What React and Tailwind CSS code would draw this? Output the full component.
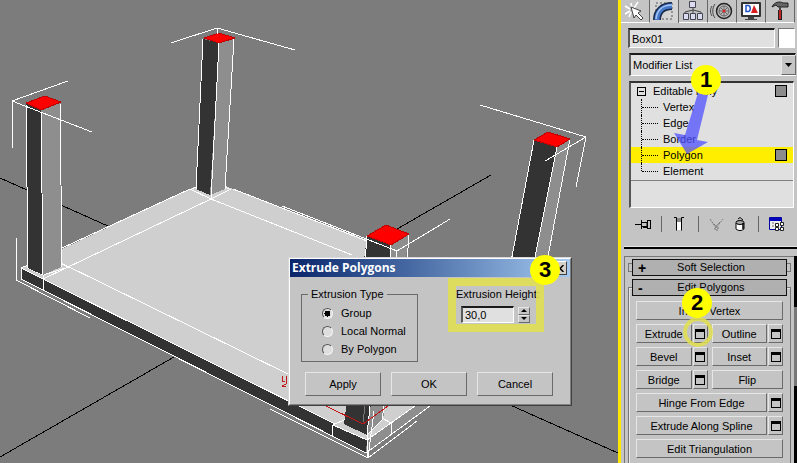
import React from "react";

const raised =
  "border border-t-[#e6e6e6] border-l-[#e6e6e6] border-b-[#6a6a6a] border-r-[#6a6a6a] bg-[#c4c4c4]";
const sunken =
  "border-t-2 border-l-2 border-b border-r border-t-[#1a1a1a] border-l-[#5a5a5a] border-b-white border-r-white bg-[#e0e0e0]";

function Scene() {
  return (
    <svg
      className="block h-full w-full"
      viewBox="0 0 618 463"
      preserveAspectRatio="xMinYMin slice"
      shapeRendering="crispEdges"
      fill="none"
      role="img"
      aria-label="Perspective viewport"
    >
      <g stroke="#000">
        <path d="M0 178L618 453M0 457L174 357M397 229L491 175" />
      </g>
      <path d="M21 268L62 249L190 189L211 180L233 189L367 240L470 290L470 366L415 406L367 440Z" fill="#cfcfcf" />
      <path d="M21 268L367 440L366 453L21 279Z" fill="#333" />
      <path d="M367 440L415 406H430L366 453Z" fill="#8e8e8e" />
      <g stroke="#fff">
        <path d="M21 279V268L28 265M62 248L190 189M233 189L367 241M21 268L367 440M21 279L366 453L430 406M367 440L415 406" />
        <path d="M43 279L211 199L352 255M61 263L288 374M190 189L211 199L231 189M28 268L43 275L69 267L61 264M43 275V290" />
        <path d="M196 187L190 190M225 187L231 190" />
      </g>

      <path d="M26 103L41 110L43 275L28 268Z" fill="#333" />
      <path d="M41 110L61 102L61 267L43 275Z" fill="#8e8e8e" />
      <path d="M26 103L28 268M41 110L43 275M60 102L62 267" stroke="#fff" />
      <path d="M26 103L45 96L61 102L41 110Z" fill="#f00" stroke="#c00000" />

      <path d="M203 39L219 43L210 195L196 189Z" fill="#333" />
      <path d="M219 43L234 39L225 189L210 195Z" fill="#8e8e8e" />
      <path d="M203 39L196 189M219 43L211 199M234 39L225 189" stroke="#fff" />
      <path d="M204 38L219 33L235 38L219 43Z" fill="#f00" stroke="#c00000" />

      <path d="M534 140L557 147L534 262L511 262Z" fill="#333" />
      <path d="M557 147L570 139L547 262L534 262Z" fill="#8e8e8e" />
      <path d="M534 140L511 262M557 147L534 262M570 139L547 262" stroke="#fff" />
      <path d="M534 140L548 132L570 139L557 147Z" fill="#f00" stroke="#c00000" />

      <path d="M333 425L344 420L382 418L391 423L367 440Z" fill="#cfcfcf" stroke="#fff" />
      <path d="M367 236L391 245L367 435L344 424Z" fill="#333" />
      <path d="M391 245L409 234L383 420L367 435Z" fill="#8e8e8e" />
      <path d="M367 236L365 262M391 245L390 262M409 234L407 262M384 406L382 420M370 406L367 435L382 420" stroke="#fff" />
      <path d="M333 425L332 437M391 423V435M367 435V458" stroke="#fff" />
      <path d="M365 406L363 422" stroke="#777" />
      <path d="M367 236L386 225L409 234L391 245Z" fill="#f00" stroke="#c00000" />

      <g stroke="#fff">
        <path d="M68 81L12 101L92 132M12 101V148M16 238V280L90 318" />
        <path d="M171 43L217 28L295 50M217 28V34" />
        <path d="M480 105L586 137L545 161M586 137L576 187" />
        <path d="M282 206L397 251L450 219M397 251L396 262" />
        <path d="M270 409L368 458L417 421M368 458L374 411" />
      </g>
      <path d="M326 406L363 424L388 406M282 376V381L285 382M287 376L286 384L282 386H286" stroke="#c41818" />
    </svg>
  );
}

function Badge({ n, className }) {
  return (
    <span
      className={
        "absolute z-20 flex size-[30px] items-center justify-center rounded-full bg-[#ff0] font-['Liberation_Sans',sans-serif] text-[22px] leading-none font-bold text-black " +
        className
      }
    >
      {n}
    </span>
  );
}

function PushButton({ children, className = "" }) {
  return (
    <button type="button" className={`${raised} flex items-center justify-center whitespace-nowrap ${className}`}>
      {children}
    </button>
  );
}

function Radio({ label, checked }) {
  return (
    <label className="flex h-[18px] items-center gap-2">
      <input
        type="radio"
        name="extrusion-type"
        defaultChecked={checked}
        className="size-[11px] appearance-none rounded-full border border-t-[#555] border-l-[#555] border-r-[#f4f4f4] border-b-[#f4f4f4] bg-[#dedede] checked:bg-[radial-gradient(circle,#000_0_3px,#dedede_3px)]"
      />
      {label}
    </label>
  );
}

function Dialog() {
  return (
    <section
      role="dialog"
      aria-label="Extrude Polygons"
      className="absolute top-[257px] left-[288px] h-[149px] w-[284px] border border-t-[#d8d8d8] border-l-[#d8d8d8] border-r-[#404040] border-b-[#404040] bg-[#c4c4c4]"
    >
      <div className="h-full border border-t-white border-l-white border-r-[#808080] border-b-[#808080]">
        <header className="flex h-[18px] items-center justify-between bg-linear-to-r from-[#0a246a] to-[#a6caf0] pr-[3px] pl-[2px]">
          <h2 className="font-['Open_Sans','Noto_Sans',sans-serif] text-[12px] leading-[16px] font-bold text-white">
            Extrude Polygons
          </h2>
          <button
            type="button"
            aria-label="Close"
            className="flex h-[14px] w-[15px] items-center justify-center border border-t-white border-l-white border-r-[#404040] border-b-[#404040] bg-[#d4d0c8]"
          >
            <svg width="8" height="7" viewBox="0 0 8 7" stroke="#000" strokeWidth="1.5">
              <path d="M0.5 0L7.5 7M7.5 0L0.5 7" />
            </svg>
          </button>
        </header>
        <div className="flex gap-[38px] pt-[10px] pl-[11px]">
          <fieldset className="h-[75px] w-[117px] border border-[#6a6a6a] pl-[20px]">
            <legend className="-ml-[14px] px-[3px] leading-[14px]">Extrusion Type</legend>
            <div className="pt-[3px]">
              <Radio label="Group" checked />
              <Radio label="Local Normal" />
              <Radio label="By Polygon" />
            </div>
          </fieldset>
          <div>
            <label htmlFor="height" className="block leading-[14px] whitespace-nowrap">
              Extrusion Height:
            </label>
            <div className="mt-[5px] ml-[5px] flex items-center gap-[4px]">
              <input
                id="height"
                defaultValue="30,0"
                className={`${sunken} h-[17px] w-[53px] pl-[2px] leading-[14px] outline-none`}
              />
              <div className="flex flex-col">
                {["M0 3L3 0L6 3Z", "M0 0H6L3 3Z"].map((d, i) => (
                  <button
                    key={d}
                    type="button"
                    aria-label={i ? "Decrease" : "Increase"}
                    className={`${raised} flex h-[8px] w-[12px] items-center justify-center`}
                  >
                    <svg width="6" height="3" viewBox="0 0 6 3">
                      <path d={d} />
                    </svg>
                  </button>
                ))}
              </div>
            </div>
          </div>
        </div>
        <div className="mt-[10px] ml-[15px] flex gap-[10px]">
          <PushButton className="h-[24px] w-[76px]">Apply</PushButton>
          <PushButton className="h-[24px] w-[76px]">OK</PushButton>
          <PushButton className="h-[24px] w-[76px]">Cancel</PushButton>
        </div>
      </div>
      <div className="pointer-events-none absolute top-[20px] left-[159px] h-[54px] w-[96px] border-8 border-[#e2e04c]/85" />
      <Badge n="3" className="-top-[3px] left-[241px]" />
    </section>
  );
}

const tabs = [
  {
    name: "Create",
    art: (
      <>
        <path d="M8 2L9 7M2 5L7 8M2 13L7 10M15 1L11 7M6 16L8 11" stroke="#fff" strokeWidth="1.5" />
        <path d="M8 6L11 17L13 14L18 19L20 17L15 12L18 10Z" fill="#fff" stroke="#444" />
      </>
    ),
  },
  {
    name: "Modify",
    art: (
      <>
        <path d="M4 1H20V17H4Z" stroke="#555" strokeDasharray="2 2" />
        <path d="M5 18C5 9 11 4 20 4" stroke="#182848" strokeWidth="8" />
        <path d="M5 18C5 9 11 4 20 4" stroke="#4678c8" strokeWidth="5" />
        <path d="M4 17C5 8 11 3 20 3" stroke="#a8c8f8" strokeWidth="1.5" />
      </>
    ),
  },
  {
    name: "Hierarchy",
    art: (
      <>
        <path d="M12 6V14M4 14V11L12 9L20 11V14" stroke="#444" />
        <path d="M8.500 .5H14.500V6.500H8.500ZM2.500 12.500H7.500V18.500H2.500ZM9.500 12.500H14.500V18.500H9.500ZM16.500 12.500H21.500V18.500H16.500Z" fill="#dcdcf0" stroke="#445" />
      </>
    ),
  },
  {
    name: "Motion",
    art: (
      <>
        <circle cx="14" cy="10" r="7.5" fill="#bbb" stroke="#222" strokeWidth="1.5" />
        <circle cx="14" cy="10" r="5" stroke="#666" />
        <path d="M14 5V15M9 10H19M10.500 6.500L17.500 13.500M17.500 6.500L10.500 13.500" stroke="#666" />
        <circle cx="14" cy="10" r="1.5" fill="#d22" />
        <path d="M5 3C2 7 2 13 5 17M2 5C0 8 0 12 2 15" stroke="#444" />
      </>
    ),
  },
  {
    name: "Display",
    art: (
      <>
        <rect x="2" y="1" width="20" height="15" rx="1" fill="#333" />
        <rect x="4" y="3" width="16" height="11" fill="#fff" />
        <path d="M7 4.500V10.500H9C12 10.500 12 4.500 9 4.500Z" stroke="#2454c8" strokeWidth="1.5" />
        <path d="M12 12L15 4L19 12Z" fill="#d82020" />
        <path d="M9 16H15V18H18V19H6V18H9Z" fill="#444" />
      </>
    ),
  },
  {
    name: "Utilities",
    art: (
      <>
        <path d="M4 6C6 1 12 0 15 2H20V6H15L14 6H10L8 4Z" fill="#666" stroke="#222" />
        <path d="M12 6V10" stroke="#444" strokeWidth="2" />
        <path d="M12 9V19" stroke="#222" strokeWidth="4" />
        <path d="M12 9V18" stroke="#c02424" strokeWidth="2" />
      </>
    ),
  },
];

const toolBtn = "flex h-[20px] items-center justify-center";

function StackTools() {
  return (
    <div className="mt-[6px] ml-[12px] flex h-[20px] items-center">
      <button type="button" aria-label="Pin stack" className={`${toolBtn} w-[20px]`}>
        <svg width="17" height="11" viewBox="0 0 17 11" fill="none" stroke="#000">
          <path d="M0 5.5H6M6.5 1V10M7 3.5H12V7.5H7M12.5 1V10M15.5 1V10M13 1.5H15M13 9.5H15" />
          <path d="M8 8H12" strokeWidth="2" />
        </svg>
      </button>
      <span className="ml-[8px] h-[16px] w-px bg-[#666]" />
      <button type="button" aria-label="Show end result" className={`${toolBtn} ml-[7px] w-[20px]`}>
        <svg width="10" height="14" viewBox="0 0 10 14" fill="none">
          <path d="M3 1H7V13H3Z" fill="#fff" />
          <path d="M3 1H7V5H3Z" fill="#888" />
          <path d="M0 .5H2.500V13.500M10 .5H7.500V13.500" stroke="#000" />
        </svg>
      </button>
      <span className="ml-[9px] h-[16px] w-px bg-[#666]" />
      <button type="button" aria-label="Make unique" className={`${toolBtn} ml-[7px] w-[20px]`}>
        <svg width="15" height="13" viewBox="0 0 15 13" fill="none" stroke="#777" strokeDasharray="2 1">
          <path d="M1 1L7 10L14 1M3 4L7 8L11 4M6 9H9V12H6Z" />
        </svg>
      </button>
      <button type="button" aria-label="Remove modifier" className={`${toolBtn} ml-[4px] w-[20px]`}>
        <svg width="10" height="14" viewBox="0 0 10 14" fill="none" stroke="#000">
          <path d="M1 6V12C3 14 7 14 9 12V6Z" fill="#fff" />
          <ellipse cx="5" cy="5.5" rx="4" ry="2" fill="#aaa" />
          <path d="M3 2L5 .5L8 3" />
          <path d="M8 6V12" strokeWidth="1.500" />
        </svg>
      </button>
      <span className="ml-[8px] h-[16px] w-px bg-[#666]" />
      <button type="button" aria-label="Configure modifier sets" className={`${toolBtn} ml-[8px] w-[20px]`}>
        <svg width="16" height="14" viewBox="0 0 16 14" fill="none">
          <path d="M.5 .5H12.500V12.500H.5Z" fill="#eee" stroke="#0000a0" />
          <path d="M1 1H12V4H1Z" fill="#0000c0" />
          <path d="M3 6H5M3 9H5" stroke="#777" />
          <path d="M6.500 6.500H9.500V9.500H6.500ZM11.500 5.500H14.500V8.500H11.500ZM6.500 10.500H9.500V13.500H6.500ZM11.500 10.500H14.500V13.500H11.500Z" fill="#fff" stroke="#222" />
        </svg>
      </button>
    </div>
  );
}

function ModifierStack() {
  const rows = ["Vertex", "Edge", "Border", "Polygon", "Element"];
  return (
    <div className="mt-[5px] ml-[8px] h-[127px] w-[165px] border-t-2 border-r border-b border-l-2 border-t-[#333] border-l-[#555] border-r-white border-b-white bg-[#e0e0e0]">
      <ul className="border-b border-[#808080] pb-[1px]">
        <li className="flex h-[16px] items-center pr-[6px] pl-[6px]">
          <button
            type="button"
            aria-label="Collapse"
            className="flex size-[9px] items-center justify-center border border-black"
          >
            <span className="h-px w-[5px] bg-black" />
          </button>
          <span className="ml-[7px] flex-1">Editable Poly</span>
          <span className="size-[12px] border border-black bg-[#8c8c8c]" />
        </li>
        {rows.map((r, i) => (
          <li
            key={r}
            className={`flex h-[16px] items-center pr-[6px] pl-[10px] ${r === "Polygon" ? "bg-[#ffee00]" : ""}`}
          >
            <span className={`w-px self-start border-l border-dotted border-black ${i === 4 ? "h-[8px]" : "h-[16px]"}`} />
            <span className="w-[16px] border-t border-dotted border-black" />
            <span className="ml-[5px] flex-1">{r}</span>
            {r === "Polygon" && <span className="size-[12px] border border-black bg-[#8c8c8c]" />}
          </li>
        ))}
      </ul>
    </div>
  );
}

function WithSettings({ label }) {
  return (
    <div className="flex gap-px">
      <PushButton className="h-[19px] flex-1">{label}</PushButton>
      <button type="button" aria-label={`${label} settings`} className={`${raised} flex h-[19px] w-[15px] items-center justify-center`}>
        <span className="h-[10px] w-[10px] border border-t-[3px] border-black" />
      </button>
    </div>
  );
}

function Rollout({ sign, title }) {
  return (
    <button
      type="button"
      className="relative z-10 mx-[4px] flex h-[17px] items-center border border-[#111] bg-[#b0b0b0] pl-[5px] leading-none"
    >
      <span className="w-[10px] text-left text-[14px] font-bold">{sign}</span>
      <span className="flex-1 pr-[12px] text-center">{title}</span>
    </button>
  );
}

function CommandPanel() {
  return (
    <aside className="relative flex h-full w-[179px] shrink-0 flex-col overflow-hidden border-l-3 border-[#ffe800] bg-[#c4c4c4]">
      <nav className="flex h-[23px] shrink-0">
        {tabs.map((t) => (
          <button
            key={t.name}
            type="button"
            aria-label={t.name}
            className={`flex w-[29px] shrink-0 items-center justify-center border-r border-r-[#666] ${
              t.name === "Modify" ? "bg-[#d4d4d4]" : "border-b border-b-white"
            }`}
          >
            <svg width="24" height="20" viewBox="0 0 24 20" fill="none">
              {t.art}
            </svg>
          </button>
        ))}
      </nav>
      <div className="mt-[5px] flex shrink-0 gap-[3px] pl-[7px]">
        <input
          aria-label="Object name"
          defaultValue="Box01"
          className={`${sunken} h-[20px] w-[147px] pl-[2px] leading-[16px] outline-none`}
        />
        <button
          type="button"
          aria-label="Object color"
          className="h-[20px] w-[17px] border border-t-[#777] border-l-[#777] border-r-white border-b-white bg-white"
        />
      </div>
      <div className="relative mt-[5px] ml-[8px] shrink-0">
        <select
          aria-label="Modifier List"
          className={`${sunken} block h-[23px] w-[167px] appearance-none pl-[2px] outline-none`}
        >
          <option>Modifier List</option>
        </select>
        <span className={`${raised} pointer-events-none absolute top-[2px] right-[1px] flex h-[20px] w-[15px] items-center justify-center`}>
          <svg width="7" height="4" viewBox="0 0 7 4">
            <path d="M0 0H7L3.500 4Z" />
          </svg>
        </span>
      </div>
      <ModifierStack />
      <StackTools />
      <div className="mt-[12px] ml-[3px] h-[3px] shrink-0 border-t border-b-2 border-t-[#e6e6e6] border-b-black" />
      <div className="mt-[7px] ml-[3px] flex min-h-0 flex-1">
        <div className="flex w-[170px] shrink-0 flex-col border-t border-l border-[#777] px-[3px] pt-[2px]">
          <div className="relative flex flex-col">
            <span className="absolute inset-x-0 top-[4px] h-[9px] border border-[#777]" />
            <Rollout sign="+" title="Soft Selection" />
          </div>
          <div className="mt-[3px] flex flex-1 flex-col">
            <Rollout sign="-" title="Edit Polygons" />
            <div className="-mt-[9px] flex flex-1 flex-col gap-[4px] border border-b-0 border-t-[#777] border-l-[#777] border-r-[#777] px-[7px] pt-[13px] shadow-[inset_1px_1px_0_#e6e6e6]">
              <PushButton className="h-[19px] shrink-0">Insert Vertex</PushButton>
              <div className="grid grid-cols-2 gap-[4px]">
                <WithSettings label="Extrude" />
                <WithSettings label="Outline" />
                <WithSettings label="Bevel" />
                <WithSettings label="Inset" />
                <WithSettings label="Bridge" />
                <PushButton className="h-[19px]">Flip</PushButton>
              </div>
              <WithSettings label="Hinge From Edge" />
              <WithSettings label="Extrude Along Spline" />
              <PushButton className="h-[19px] shrink-0">Edit Triangulation</PushButton>
            </div>
          </div>
        </div>
        <div className="flex-1 bg-black pt-[51px]">
          <div className="h-[79px] bg-[#777]" />
        </div>
      </div>
      <svg
        className="pointer-events-none absolute top-[90px] left-[51px]"
        width="40"
        height="66"
        viewBox="0 0 40 66"
      >
        <path d="M26 3L36 5L25 50L36 52L15 64L2 43L13 45Z" fill="#5050ff" fillOpacity="0.75" />
      </svg>
      <span className="pointer-events-none absolute top-[317px] left-[62px] size-[30px] rounded-full border-4 border-[#e2e04c]/85" />
      <Badge n="1" className="top-[65px] left-[70px]" />
      <Badge n="2" className="top-[288px] left-[61px]" />
    </aside>
  );
}

export default function App() {
  return (
    <div className="flex h-screen min-h-[463px] overflow-hidden bg-[#7c7c7c] font-['Liberation_Sans',Arial,sans-serif] text-[11px] leading-[14px] text-black">
      <main className="relative min-w-0 flex-1 overflow-hidden">
        <Scene />
        <Dialog />
      </main>
      <CommandPanel />
    </div>
  );
}
